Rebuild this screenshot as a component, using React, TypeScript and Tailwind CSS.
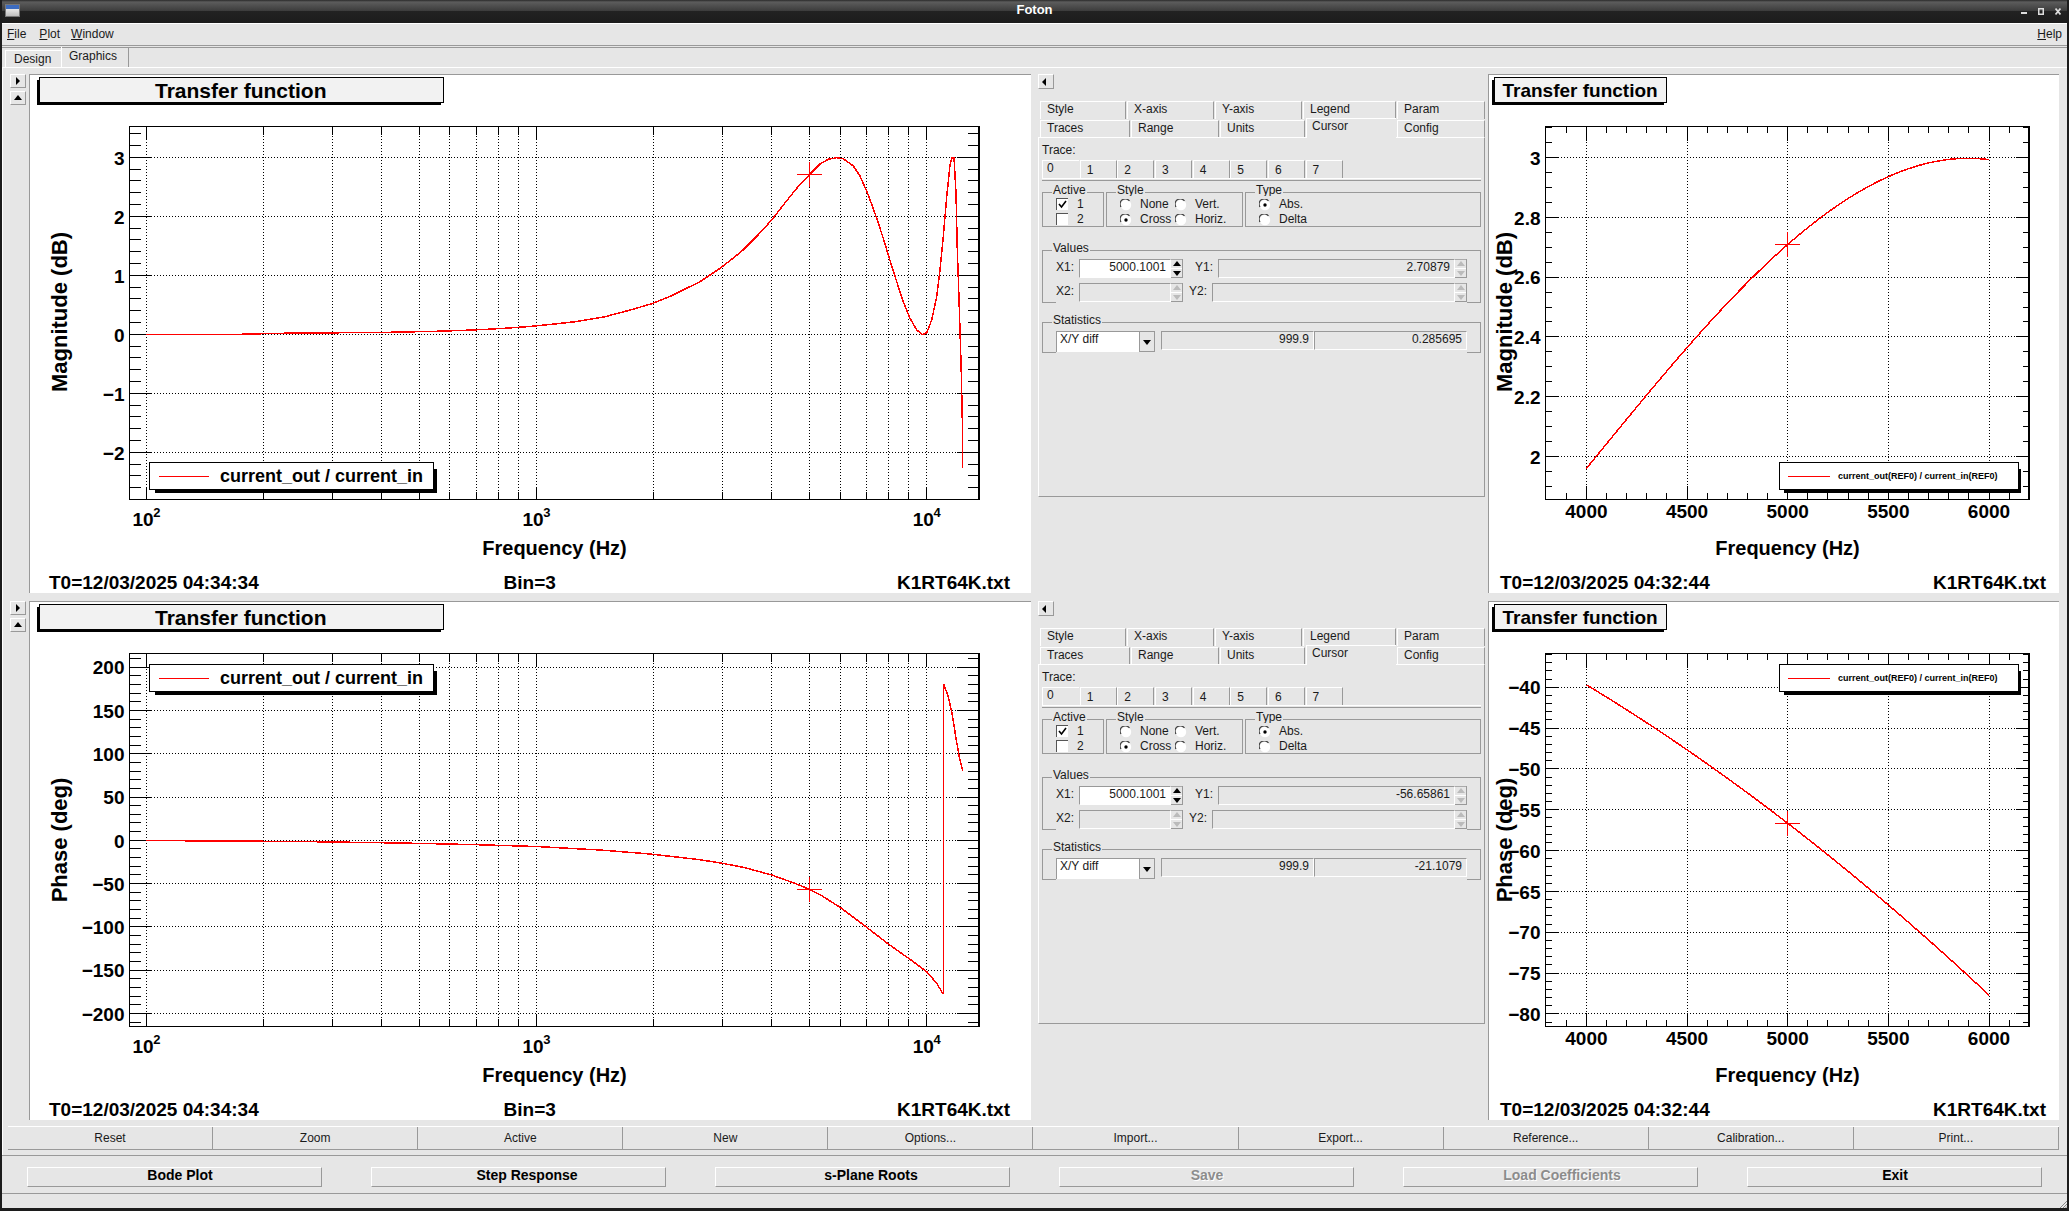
import React from 'react';

const range = (from: number, to: number, step: number) => {
  const out: number[] = [];
  for (let v = from; v <= to + step / 1000; v += step) out.push(v);
  return out;
};

// log x axis of the two big plots
const logX = (f: number) => 146.4 + 390.15 * (Math.log10(f) - 2);
const logDecades = [100, 1000, 10000].map(logX);
const logSubs = [100, 1000].flatMap((d) => [2, 3, 4, 5, 6, 7, 8, 9].map((m) => logX(d * m)));

// linear x axis of the two zoomed plots
const linX = (f: number) => 1586.4 + (f - 4000) * 0.2013;
const linMajor = range(4000, 6000, 500);
const linMinor = range(3900, 6100, 100).filter((f) => Math.round(f) % 500 !== 0);

const magY = (v: number) => 334.3 - 59 * v;
const phaseY = (v: number) => 840.3 - 0.866 * v;
const magZoomY = (v: number) => 157.5 + (3 - v) * 299;
const phaseZoomY = (v: number) => 687.2 + (-40 - v) * 8.166;

const magCurve: [number, number][] = [
  [146, 334.3], [240, 334.3], [279, 333.3], [389, 332.3], [436, 331.3], [465.5, 330.3], [487, 329.3],
  [504, 328.3], [518.6, 327.3], [532, 326.3], [552, 324.3], [575, 321.7], [605, 316.7], [631.4, 309.7],
  [653, 303.3], [671, 296], [687.8, 287.7], [700, 281.7], [720, 268.3], [733, 258.3], [743, 250], [758, 235],
  [771.7, 220], [783.3, 205], [796.7, 188.3], [809.3, 174.7], [820, 164], [828.3, 159.3], [836.7, 157.7],
  [843.3, 158.7], [853.3, 166], [860, 176], [868.3, 195], [876.7, 218.3], [883.3, 238.3], [888.3, 255],
  [896.7, 281.7], [903.3, 301.7], [910, 318.3], [916.7, 330], [922.7, 334.7], [926.7, 332.7], [931.7, 320],
  [936.7, 296.7], [940, 270], [943.3, 236.7], [946.7, 196.7], [950, 165], [952, 157.7], [954, 157.7],
  [956, 193.3], [957.3, 250], [958.7, 290], [960, 330], [961.3, 373.3], [962.3, 420], [962.7, 467.7],
];
const phaseCurveA: [number, number][] = [
  [146, 840.5], [300, 841.5], [400, 843], [470, 844.5], [536, 846.5], [600, 850], [650, 854], [700, 859.7], [722.3, 863.3],
  [743.3, 867.3], [771.7, 875], [796.7, 884], [809.3, 889.3], [821.7, 895.7], [840, 907.3], [866.7, 927.3],
  [888.3, 944], [910, 959.3], [926.7, 971.7], [936.7, 983.3], [943.3, 994.3],
];
const phaseCurveB: [number, number][] = [
  [943.7, 684.3], [948.3, 696.7], [952.3, 715], [956, 738.3], [959.3, 756.7], [962.7, 770.7],
];

// smooth curve through the five values read off the axis
const magAnchors = [1.96, 2.364, 2.709, 2.936, 2.993];
const magZoomValue = (f: number) => {
  const d = (f - 4000) / 500;
  return magAnchors.reduce((sum, v, i) => {
    let term = v;
    for (let j = 0; j < magAnchors.length; j++) {
      if (j !== i) term *= (d - j) / (i - j);
    }
    return sum + term;
  }, 0);
};
const magZoomCurve = range(4000, 6000, 50).map((f) => [linX(f), magZoomY(magZoomValue(f))] as [number, number]);

const phaseZoomCurve = range(4000, 6000, 100).map((f) => {
  const d = (f - 5000) / 1000;
  return [linX(f), phaseZoomY(-56.66 - 19 * d - 2.04 * d * d)] as [number, number];
});

const toPoints = (pts: [number, number][]) => pts.map(([x, y]) => `${x},${y}`).join(' ');

type Label = { y: number; text: string };

type PlotProps = {
  x0: number;
  y0: number;
  w: number;
  h: number;
  frame: [number, number, number, number];
  titleBox: [number, number];
  titleX: number;
  titleSize: number;
  xMajor: number[];
  xMinor: number[];
  xGrid: number[];
  yMajor: Label[];
  yMinor: number[];
  xTickLens: [number, number];
  yTickLens: [number, number];
  curves: [number, number][][];
  cross: [number, number];
  children: React.ReactNode;
};

const Plot = ({
  x0, y0, w, h, frame, titleBox, titleX, titleSize, xMajor, xMinor, xGrid, yMajor, yMinor, xTickLens, yTickLens, curves, cross, children,
}: PlotProps) => {
  const [l, t, r, b] = frame;
  return (
    <svg className="block w-full h-full" viewBox={`${x0} ${y0} ${w} ${h}`} fontWeight="bold" fill="#000">
      <g shapeRendering="crispEdges">
        {/* title pave */}
        <rect x={titleBox[0]} y={y0 + 5} width={titleBox[1] - titleBox[0] - 3.5} height={25} fill="#000" />
        <rect x={titleBox[0] + 2.5} y={y0 + 2} width={titleBox[1] - titleBox[0] - 3} height={25} fill="#f2f2f2" stroke="#000" />
        {/* grid */}
        <g stroke="#000" strokeDasharray="1 2">
          {xGrid.map((x) => <line key={x} x1={x} x2={x} y1={t} y2={b} />)}
          {yMajor.map((m) => <line key={m.y} x1={l} x2={r} y1={m.y} y2={m.y} />)}
        </g>
        {/* ticks */}
        <g stroke="#000">
          {xMajor.map((x) => (
            <g key={x}>
              <line x1={x} x2={x} y1={t} y2={t + xTickLens[0]} />
              <line x1={x} x2={x} y1={b} y2={b - xTickLens[0]} />
            </g>
          ))}
          {xMinor.map((x) => (
            <g key={x}>
              <line x1={x} x2={x} y1={t} y2={t + xTickLens[1]} />
              <line x1={x} x2={x} y1={b} y2={b - xTickLens[1]} />
            </g>
          ))}
          {yMajor.map((m) => (
            <g key={m.y}>
              <line x1={l} x2={l + yTickLens[0]} y1={m.y} y2={m.y} />
              <line x1={r} x2={r - yTickLens[0]} y1={m.y} y2={m.y} />
            </g>
          ))}
          {yMinor.map((y) => (
            <g key={y}>
              <line x1={l} x2={l + yTickLens[1]} y1={y} y2={y} />
              <line x1={r} x2={r - yTickLens[1]} y1={y} y2={y} />
            </g>
          ))}
        </g>
        <g stroke="#ff0000" fill="none" strokeWidth="1.5">
          {curves.map((c, i) => <polyline key={i} points={toPoints(c)} />)}
        </g>
        <g stroke="#ff0000">
          <line x1={cross[0] - 12.5} x2={cross[0] + 12.5} y1={cross[1]} y2={cross[1]} />
          <line x1={cross[0]} x2={cross[0]} y1={cross[1] - 12.5} y2={cross[1] + 12.5} />
        </g>
        <rect x={l} y={t} width={r - l} height={b - t} fill="none" stroke="#000" />
        <line x1={r} x2={r} y1={t} y2={b} stroke="#000" strokeWidth="2" />
      </g>
      <text x={titleX} y={y0 + (titleSize === 21 ? 22.8 : 21.8)} fontSize={titleSize}>Transfer function</text>
      {yMajor.map((m) => (
        <text key={m.y} x={l - 5} y={m.y + 7.2} fontSize="19" textAnchor="end">{m.text}</text>
      ))}
      {children}
    </svg>
  );
};

const Legend = ({ x, y, w, size, text, lineFrom, lineTo, textX, dark }: { x: number; y: number; w: number; size: number; text: string; lineFrom: number; lineTo: number; textX: number; dark: [number, number] }) => (
  <g>
    <rect x={dark[0]} y={y + 6} width={dark[1] - dark[0]} height={24} fill="#000" shapeRendering="crispEdges" />
    <rect x={x} y={y} width={w} height={26.5} fill="#fff" stroke="#000" shapeRendering="crispEdges" />
    <line x1={lineFrom} x2={lineTo} y1={y + 13.5} y2={y + 13.5} stroke="#ff0000" shapeRendering="crispEdges" />
    <text x={textX} y={y + 13.5 + size * 0.36} fontSize={size}>{text}</text>
  </g>
);

const LogXLabels = ({ base }: { base: number }) => (
  <>
    {[[2, logDecades[0]], [3, logDecades[1]], [4, logDecades[2]]].map(([p, x]) => (
      <g key={p}>
        <text x={x - 14} y={base} fontSize="19">10</text>
        <text x={x + 6.8} y={base - 9.5} fontSize="13">{p}</text>
      </g>
    ))}
  </>
);

const Footer = ({ y, t0, startX, right, bin }: { y: number; t0: string; startX: number; right: number; bin?: boolean }) => (
  <>
    <text x={startX} y={y} fontSize="19">{t0}</text>
    {bin && <text x={503.6} y={y} fontSize="19">Bin=3</text>}
    <text x={right} y={y} fontSize="19" textAnchor="end">K1RT64K.txt</text>
  </>
);

const YTitle = ({ x, y, text }: { x: number; y: number; text: string }) => (
  <text transform={`translate(${x} ${y}) rotate(-90)`} fontSize="22" textAnchor="middle">{text}</text>
);

const Triangle = ({ dir, color = '#000' }: { dir: 'left' | 'right' | 'up' | 'down'; color?: string }) => {
  const pts = { left: '5,1 5,9 1,5', right: '3,1 3,9 7,5', up: '5,2 9,7 1,7', down: '1,3 9,3 5,8' }[dir];
  return (
    <svg width="10" height="10" viewBox="0 0 10 10"><polygon points={pts} fill={color} /></svg>
  );
};

const Raised = ({ children, className }: { children: React.ReactNode; className: string }) => (
  <div className={`flex items-center justify-center border-t border-l border-t-white border-l-white border-r border-b border-r-[#999] border-b-[#999] ${className}`}>{children}</div>
);

const Radio = ({ on }: { on?: boolean }) => (
  <svg width="12" height="12" viewBox="0 0 12 12" className="mt-[3px] shrink-0">
    <circle cx="6" cy="6" r="5.2" fill="#fff" />
    <path d="M1 8A5.2 5.2 0 0 1 9.5 2" fill="none" stroke="#444" strokeWidth="1.2" />
    {on && <circle cx="6" cy="6" r="1.7" fill="#000" />}
  </svg>
);

const Check = ({ on }: { on?: boolean }) => (
  <div className="w-[12px] h-[12px] bg-white border-l border-t border-[#555] shrink-0">
    {on && (
      <svg width="11" height="11" viewBox="0 0 11 11"><path d="M2 5l2.5 3L9 2" fill="none" stroke="#000" strokeWidth="1.6" /></svg>
    )}
  </div>
);

const Group = ({ title, className, innerClass, children }: { title: string; className: string; innerClass: string; children: React.ReactNode }) => (
  <div className={`relative border border-[#999] ${className}`}>
    <span className="absolute -top-[11px] left-[9px] px-[1px] bg-[#e6e6e6] leading-[16px]">{title}</span>
    <div className={`relative mx-[13px] -mb-[1px] bg-[#e6e6e6] ${innerClass}`}>{children}</div>
  </div>
);

const Spin = ({ enabled }: { enabled?: boolean }) => (
  <div className="w-[12px] h-[19px] flex flex-col shrink-0 border-b border-[#999] border-r">
    <div className="h-[9px] flex items-center justify-center border-t border-[#aaa]"><Triangle dir="up" color={enabled ? '#000' : '#bbb'} /></div>
    <div className="h-[9px] flex items-center justify-center border-t border-white"><Triangle dir="down" color={enabled ? '#000' : '#bbb'} /></div>
  </div>
);

const Field = ({ className, children }: { className: string; children?: React.ReactNode }) => (
  <div className={`flex items-center justify-end h-[19px] pr-[4px] pb-[4px] border-t border-l border-t-[#999] border-l-[#999] border-b border-r border-b-white border-r-white ${className}`}>{children}</div>
);

const topTabs = [
  { label: 'Style', w: 'w-[86px]' },
  { label: 'X-axis', w: 'w-[87px]' },
  { label: 'Y-axis', w: 'w-[87px]' },
  { label: 'Legend', w: 'w-[93px]' },
  { label: 'Param', w: 'w-[88px]' },
];
const lowTabs = [
  { label: 'Traces', w: 'w-[90px]' },
  { label: 'Range', w: 'w-[88px]' },
  { label: 'Units', w: 'w-[85px]' },
  { label: 'Cursor', w: 'w-[90px]', active: true },
  { label: 'Config', w: 'w-[88px]' },
];

const SidePanel = ({ y1, diff }: { y1: string; diff: string }) => (
  <div className="w-[457px] h-full pl-[7px] shrink-0 text-[12px] text-[#1a1a1a] leading-none">
    <Raised className="w-[16px] h-[15px]"><Triangle dir="left" /></Raised>
    <div className="flex gap-[1px] ml-[2px] mt-[12px] h-[18px]">
      {topTabs.map((t) => (
        <div key={t.label} className={`${t.w} pl-[6px] pb-[4px] flex items-center border-t border-l border-t-white border-l-white border-r border-r-[#999]`}>{t.label}</div>
      ))}
    </div>
    <div className="flex gap-[1px] ml-[2px] mt-[1px] h-[17px]">
      {lowTabs.map((t) => (
        <div key={t.label} className={t.active
          ? `${t.w} relative z-10 h-[20px] -mt-[2px] pl-[5px] pb-[6px] flex items-center bg-[#e6e6e6] border-t border-l border-t-white border-l-white`
          : `${t.w} pl-[6px] pb-[2px] flex items-center border-t border-l border-t-white border-l-white border-r border-r-[#999]`}>{t.label}</div>
      ))}
    </div>
    <div className="w-[447px] h-[360px] pl-[3px] pr-[3px] border border-t-white border-l-white border-r-[#999] border-b-[#999]">
      <div className="h-[22px] pt-[6px]">Trace:</div>
      <div className="flex h-[18px] gap-[0.67px]">
        {['0', '1', '2', '3', '4', '5', '6', '7'].map((n) => (
          <div key={n} className={n === '0'
            ? 'w-[37px] border-t border-l border-t-white border-l-white pl-[4px] pb-[3px] flex items-center'
            : 'w-[37px] border-t border-l border-t-white border-l-white border-r border-r-[#999] pl-[6px] pt-[1px] flex items-center'}>{n}</div>
        ))}
      </div>
      <div className="h-[3px] border-b border-[#999] shadow-[inset_0_1px_0_#fff]" />
      <div className="flex gap-[2px] mt-[11px] h-[35px]">
        <Group title="Active" className="w-[62px] h-[35px]" innerClass="h-[30px] mt-[3px] w-[35px] flex flex-col">
          {[['1', true], ['2', false]].map(([n, on]) => (
            <div key={String(n)} className="h-[15px] flex items-center gap-[9px]"><Check on={!!on} /><span>{n}</span></div>
          ))}
        </Group>
        <Group title="Style" className="w-[137px] h-[35px]" innerClass="h-[30px] mt-[3px] w-[111px] grid grid-cols-[55px_56px]">
          {[['None', false], ['Vert.', false], ['Cross', true], ['Horiz.', false]].map(([n, on]) => (
            <div key={String(n)} className="h-[15px] flex items-center gap-[8px]"><Radio on={!!on} /><span>{n}</span></div>
          ))}
        </Group>
        <Group title="Type" className="w-[237px] h-[35px]" innerClass="h-[30px] mt-[3px] flex flex-col">
          {[['Abs.', true], ['Delta', false]].map(([n, on]) => (
            <div key={String(n)} className="h-[15px] flex items-center gap-[8px]"><Radio on={!!on} /><span>{n}</span></div>
          ))}
        </Group>
      </div>
      <Group title="Values" className="w-[439px] h-[53px] mt-[23px]" innerClass="h-[44px] mt-[8px] flex flex-col gap-[5px]">
        <div className="flex items-center h-[19px]">
          <span className="w-[23px] pb-[4px]">X1:</span>
          <Field className="w-[92px] bg-white">5000.1001</Field>
          <Spin enabled />
          <span className="w-[35px] pl-[12px] pb-[4px]">Y1:</span>
          <Field className="flex-1">{y1}</Field>
          <Spin />
        </div>
        <div className="flex items-center h-[19px]">
          <span className="w-[23px] pb-[4px]">X2:</span>
          <Field className="w-[92px]" />
          <Spin />
          <span className="w-[29px] pl-[6px] pb-[4px]">Y2:</span>
          <Field className="flex-1" />
          <Spin />
        </div>
      </Group>
      <Group title="Statistics" className="w-[439px] h-[31px] mt-[19px]" innerClass="h-[22px] mt-[8px] flex items-start">
        <div className="w-[99px] h-[21px] bg-white flex items-center justify-between pl-[3px] pb-[6px] shrink-0 border-t border-l border-[#999]">
          X/Y diff
          <div className="w-[16px] h-[20px] mb-[-6px] bg-[#e6e6e6] flex items-center justify-center border-l border-r border-b border-[#999]"><Triangle dir="down" /></div>
        </div>
        <Field className="w-[153px] ml-[6px]">999.9</Field>
        <Field className="flex-1">{diff}</Field>
      </Group>
    </div>
  </div>
);

const SideButtons = () => (
  <div className="w-[27px] pl-[8px] flex flex-col gap-[3px] shrink-0">
    <Raised className="w-[16px] h-[14px]"><Triangle dir="right" /></Raised>
    <Raised className="w-[16px] h-[14px]"><Triangle dir="up" /></Raised>
  </div>
);

const magLabels: Label[] = [3, 2, 1, 0, -1, -2].map((v) => ({ y: magY(v), text: v < 0 ? `\u2212${-v}` : `${v}` }));
const phaseLabels: Label[] = range(-200, 200, 50).map((v) => ({ y: phaseY(v), text: v < 0 ? `\u2212${-v}` : `${v}` }));
const magZoomLabels: Label[] = [3, 2.8, 2.6, 2.4, 2.2, 2].map((v) => ({ y: magZoomY(v), text: `${v}` }));
const phaseZoomLabels: Label[] = range(-80, -40, 5).map((v) => ({ y: phaseZoomY(v), text: `\u2212${-v}` }));

const LinXLabels = ({ tickBase, titleBase }: { tickBase: number; titleBase: number }) => (
  <>
    {linMajor.map((f) => (
      <text key={f} x={linX(f)} y={tickBase} fontSize="19" textAnchor="middle">{Math.round(f)}</text>
    ))}
    <text x={1787.5} y={titleBase} fontSize="20" textAnchor="middle">Frequency (Hz)</text>
  </>
);

const bottomRow = ['Reset', 'Zoom', 'Active', 'New', 'Options...', 'Import...', 'Export...', 'Reference...', 'Calibration...', 'Print...'];
const mainRow = [
  { label: 'Bode Plot', pad: 'pl-[12px]' },
  { label: 'Step Response', pad: 'pl-[18px]' },
  { label: 's-Plane Roots', pad: 'pl-[18px]' },
  { label: 'Save', pad: 'pl-[2px]', off: true },
  { label: 'Load Coefficients', pad: 'pl-[24px]', off: true },
  { label: 'Exit', pad: 'pl-[2px]' },
];

const App: React.FC = () => {
  return (
    <div className="w-[2069px] h-[1211px] flex flex-col overflow-hidden bg-[#e6e6e6] border-x-2 border-b-[3px] border-[#1c1c1c] font-['Liberation_Sans',Arial,sans-serif] text-[12px] text-[#1a1a1a]">
      {/* window title */}
      <div className="relative h-[23px] shrink-0 flex items-center justify-center -mx-[2px] bg-[linear-gradient(#2a2a2a_0px,#5c5c5c_2px,#3c3c3c_11px,#222_11px,#1c1c1c_23px)]">
        <div className="absolute left-[5px] top-[4px] w-[15px] h-[13px] border border-[#777] bg-[linear-gradient(#3d6cc0_0,#3d6cc0_4px,#e8e8e8_4px,#bdbdbd_100%)]" />
        <span className="font-bold text-[13px] text-white leading-none pb-[4px]">Foton</span>
        <div className="absolute right-[8px] top-[7px] flex items-end gap-[11px]">
          <svg width="6" height="8" viewBox="0 0 6 8"><rect y="5" width="6" height="2" fill="#ddd" /></svg>
          <svg width="6" height="7" viewBox="0 0 6 7"><rect x="0.75" y="0.75" width="4.5" height="5.5" fill="none" stroke="#ddd" strokeWidth="1.5" /></svg>
          <svg width="6" height="7" viewBox="0 0 6 7"><path d="M0.5 0.5l5 6M5.5 0.5l-5 6" stroke="#ddd" strokeWidth="1.7" /></svg>
        </div>
      </div>

      {/* menu */}
      <div className="h-[23px] shrink-0 flex items-center pl-[5px] pr-[5px] pb-[2px] border-t border-white border-b border-b-[#999]">
        <span className="mr-[13px]"><u className="underline">F</u>ile</span>
        <span className="mr-[11px]"><u className="underline">P</u>lot</span>
        <span><u className="underline">W</u>indow</span>
        <span className="ml-auto"><u className="underline">H</u>elp</span>
      </div>

      {/* tabs */}
      <div className="h-[20px] mt-[1px] shrink-0 flex items-end pl-[3px] border-t border-[#999]">
        <div className="w-[56px] h-[17px] pl-[8px] flex items-center border-t border-l border-t-white border-l-white">Design</div>
        <div className="w-[68px] h-[20px] pl-[7px] pb-[3px] flex items-center border-l border-r border-l-white border-r-[#999]">Graphics</div>
      </div>

      <div className="shrink-0 border-t border-l border-white pt-[6px] pb-[5px] flex flex-col gap-[8px]">
        {/* magnitude row */}
        <div className="flex h-[519px] shrink-0 -ml-[1px]">
          <SideButtons />
          <div className="w-[1002px] h-full bg-white border-t border-l border-[#999] shrink-0">
            <Plot x0={30} y0={75} w={1001} h={518} frame={[129.5, 126.5, 979, 499.5]} titleBox={[37, 444]} titleX={155} titleSize={21}
              xMajor={logDecades} xMinor={logSubs} xGrid={[...logDecades, ...logSubs]}
              yMajor={magLabels} yMinor={range(-2.8, 3.4, 0.2).filter((v) => Math.abs(v - Math.round(v)) > 0.01).map(magY)}
              xTickLens={[13, 8]} yTickLens={[22, 11]} curves={[magCurve]} cross={[809.3, 174.7]}>
              <LogXLabels base={526} />
              <YTitle x={67} y={312} text="Magnitude (dB)" />
              <text x={554.5} y={554.5} fontSize="20" textAnchor="middle">Frequency (Hz)</text>
              <Legend x={149.5} y={462.5} w={284} size={18} text="current_out / current_in" lineFrom={159} lineTo={209} textX={220} dark={[155, 436.6]} />
              <Footer y={588.5} t0="T0=12/03/2025 04:34:34" startX={49} right={1010} bin />
            </Plot>
          </div>
          <SidePanel y1="2.70879" diff="0.285695" />
          <div className="w-[571px] h-full bg-white border-t border-l border-[#999] shrink-0">
            <Plot x0={1489} y0={75} w={570} h={518} frame={[1545.5, 126.5, 2029, 499.5]} titleBox={[1492.4, 1667]} titleX={1502.5} titleSize={19}
              xMajor={linMajor.map(linX)} xMinor={linMinor.map(linX)} xGrid={linMajor.map(linX)}
              yMajor={magZoomLabels} yMinor={range(1.9, 3.1, 0.05).filter((v) => Math.abs(v * 5 - Math.round(v * 5)) > 0.01).map(magZoomY)}
              xTickLens={[14, 6.5]} yTickLens={[13, 6.5]} curves={[magZoomCurve]} cross={[1787.5, 244]}>
              <LinXLabels tickBase={518} titleBase={554.5} />
              <YTitle x={1512} y={312} text="Magnitude (dB)" />
              <Legend x={1779} y={462.5} w={239} size={9} text="current_out(REF0) / current_in(REF0)" lineFrom={1787.5} lineTo={1829.5} textX={1838} dark={[1784, 2021.3]} />
              <Footer y={588.5} t0="T0=12/03/2025 04:32:44" startX={1500} right={2046} />
            </Plot>
          </div>
        </div>

        {/* phase row */}
        <div className="flex h-[519px] shrink-0 -ml-[1px]">
          <SideButtons />
          <div className="w-[1002px] h-full bg-white border-t border-l border-[#999] shrink-0">
            <Plot x0={30} y0={602} w={1001} h={518} frame={[129.5, 653.5, 979, 1026.5]} titleBox={[37, 444]} titleX={155} titleSize={21}
              xMajor={logDecades} xMinor={logSubs} xGrid={[...logDecades, ...logSubs]}
              yMajor={phaseLabels} yMinor={range(-210, 210, 10).filter((v) => v % 50 !== 0).map(phaseY)}
              xTickLens={[13, 8]} yTickLens={[22, 11]} curves={[phaseCurveA, [[943.3, 994.3], [943.7, 684.3]], phaseCurveB]} cross={[809.3, 889.3]}>
              <LogXLabels base={1053} />
              <YTitle x={67} y={840} text="Phase (deg)" />
              <text x={554.5} y={1081.5} fontSize="20" textAnchor="middle">Frequency (Hz)</text>
              <Legend x={149.5} y={664.5} w={284} size={18} text="current_out / current_in" lineFrom={159} lineTo={209} textX={220} dark={[155, 436.6]} />
              <Footer y={1115.5} t0="T0=12/03/2025 04:34:34" startX={49} right={1010} bin />
            </Plot>
          </div>
          <SidePanel y1="-56.65861" diff="-21.1079" />
          <div className="w-[571px] h-full bg-white border-t border-l border-[#999] shrink-0">
            <Plot x0={1489} y0={602} w={570} h={518} frame={[1545.5, 653.5, 2029, 1026.5]} titleBox={[1492.4, 1667]} titleX={1502.5} titleSize={19}
              xMajor={linMajor.map(linX)} xMinor={linMinor.map(linX)} xGrid={linMajor.map(linX)}
              yMajor={phaseZoomLabels} yMinor={range(-81, -36, 1).filter((v) => v % 5 !== 0).map(phaseZoomY)}
              xTickLens={[14, 6.5]} yTickLens={[13, 6.5]} curves={[phaseZoomCurve]} cross={[1787.5, 823.5]}>
              <LinXLabels tickBase={1045} titleBase={1081.5} />
              <YTitle x={1511.5} y={840} text="Phase (deg)" />
              <Legend x={1779} y={664.5} w={239} size={9} text="current_out(REF0) / current_in(REF0)" lineFrom={1787.5} lineTo={1829.5} textX={1838} dark={[1784, 2021.3]} />
              <Footer y={1115.5} t0="T0=12/03/2025 04:32:44" startX={1500} right={2046} />
            </Plot>
          </div>
        </div>

        <div className="flex ml-[5px] mr-[8px] -mt-[2px] h-[24px] border-t border-white border-b border-b-[#999]">
          {bottomRow.map((b) => (
            <div key={b} className="flex-1 flex items-center justify-center border-r border-[#999]">{b}</div>
          ))}
        </div>
      </div>

      {/* main actions */}
      <div className="h-[38px] shrink-0 flex gap-[49px] pl-[24.5px] pt-[11px] border-t border-[#999]">
        {mainRow.map((b) => (
          <div key={b.label} className={b.off
            ? `w-[295px] h-[20px] flex justify-center font-bold text-[14px] leading-[14px] text-[#8c8c8c] [text-shadow:1px_1px_0_#fff] border-t border-l border-t-white border-l-white border-r border-b border-r-[#999] border-b-[#999] ${b.pad}`
            : `w-[295px] h-[20px] flex justify-center font-bold text-[14px] leading-[14px] text-black border-t border-l border-t-white border-l-white border-r border-b border-r-[#999] border-b-[#999] ${b.pad}`}>{b.label}</div>
        ))}
      </div>

      {/* status */}
      <div className="flex-1 flex justify-end items-end border-t border-[#999]">
        <svg width="8" height="8" viewBox="0 0 8 8"><path d="M8 1L1 8M8 4L4 8M8 6.5L6.5 8" stroke="#888" /></svg>
      </div>
    </div>
  );
};

export default App;
